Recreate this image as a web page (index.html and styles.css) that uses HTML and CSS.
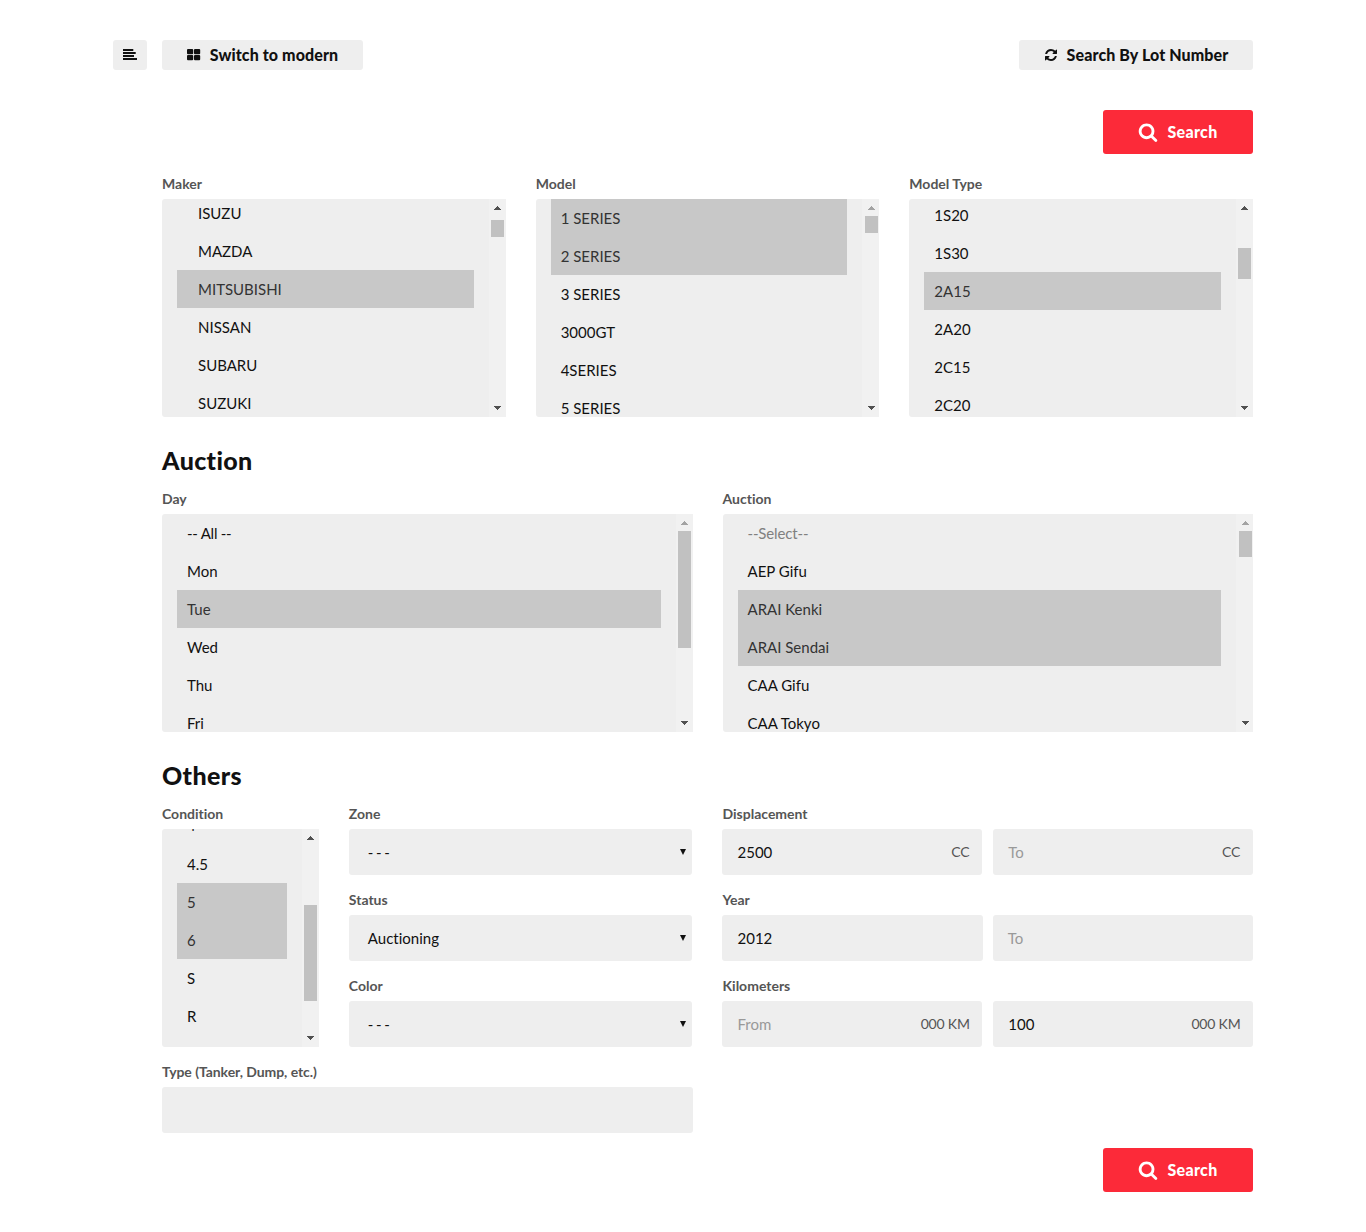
FILE: index.html
```html
<!DOCTYPE html>
<html lang="en">
<head>
<meta charset="utf-8">
<title>Auction Search</title>
<link rel="stylesheet" href="styles.css">
</head>
<body>
<svg class="defs" width="0" height="0">
  <symbol id="i-align" viewBox="0 0 14 14"><path d="M0 1h10.3v2H0zM0 4h12.7v2H0zM0 7h11v2H0zM0 10h14v2H0z"/></symbol>
  <symbol id="i-grid" viewBox="0 0 14 14"><rect x="0" y="1" width="6.2" height="5.2" rx="1"/><rect x="7" y="1" width="6.2" height="5.2" rx="1"/><rect x="0" y="7" width="6.2" height="5.2" rx="1"/><rect x="7" y="7" width="6.2" height="5.2" rx="1"/></symbol>
  <symbol id="i-refresh" viewBox="0 0 1792 1792"><path d="M1639 1056q0 5-1 7-64 268-268 434.5t-478 166.5q-146 0-282.5-55t-243.5-157l-129 129q-19 19-45 19t-45-19-19-45v-448q0-26 19-45t45-19h448q26 0 45 19t19 45-19 45l-137 137q71 66 161 102t187 36q134 0 250-65t186-179q11-17 53-117 8-23 30-23h192q13 0 22.5 9.5t9.5 22.5zm25-800v448q0 26-19 45t-45 19h-448q-26 0-45-19t-19-45 19-45l138-138q-148-137-349-137-134 0-250 65t-186 179q-11 17-53 117-8 23-30 23h-199q-13 0-22.5-9.5t-9.5-22.5v-7q65-268 270-434.5t480-166.5q146 0 284 55.5t245 156.5l130-129q19-19 45-19t45 19 19 45z"/></symbol>
  <symbol id="i-search" viewBox="0 0 1792 1792"><path d="M1216 832q0-185-131.5-316.5t-316.5-131.5-316.5 131.5-131.5 316.5 131.5 316.5 316.5 131.5 316.5-131.5 131.5-316.5zm512 832q0 52-38 90t-90 38q-54 0-90-38l-343-342q-179 124-399 124-143 0-273.5-55.5t-225-150-150-225-55.5-273.5 55.5-273.5 150-225 225-150 273.5-55.5 273.5 55.5 225 150 150 225 55.5 273.5q0 220-124 399l343 343q37 37 37 90z"/></symbol>
  <symbol id="i-up" viewBox="0 0 7 4"><path d="M3 0h1v1h1v1h1v1h1v1H0V3h1V2h1V1h1z"/></symbol>
  <symbol id="i-down" viewBox="0 0 7 4"><path d="M0 0h7v1H6v1H5v1H4v1H3V3H2V2H1V1H0z"/></symbol>
</svg>
<main class="page">
  <header class="toolbar">
    <button class="btn btn-menu" aria-label="Menu"><svg class="ico"><use href="#i-align"/></svg></button>
    <button class="btn btn-mode"><svg class="ico"><use href="#i-grid"/></svg><span>Switch to modern</span></button>
    <button class="btn btn-lot"><svg class="ico"><use href="#i-refresh"/></svg><span>Search By Lot Number</span></button>
  </header>
  <form class="form">
    <div class="actions"><button type="button" class="search"><svg class="ico-lg"><use href="#i-search"/></svg><span>Search</span></button></div>

    <section class="cols three">
      <div class="field">
        <label>Maker</label>
        <div class="list maker">
          <ul><li>ISUZU</li><li>MAZDA</li><li class="on">MITSUBISHI</li><li>NISSAN</li><li>SUBARU</li><li>SUZUKI</li></ul>
          <div class="bar"><svg class="arrow"><use href="#i-up"/></svg><i class="thumb"></i><svg class="arrow"><use href="#i-down"/></svg></div>
        </div>
      </div>
      <div class="field">
        <label>Model</label>
        <div class="list model">
          <ul><li class="on">1 SERIES</li><li class="on">2 SERIES</li><li>3 SERIES</li><li>3000GT</li><li>4SERIES</li><li>5 SERIES</li></ul>
          <div class="bar"><svg class="arrow off"><use href="#i-up"/></svg><i class="thumb"></i><svg class="arrow"><use href="#i-down"/></svg></div>
        </div>
      </div>
      <div class="field">
        <label>Model Type</label>
        <div class="list type">
          <ul><li>1S20</li><li>1S30</li><li class="on">2A15</li><li>2A20</li><li>2C15</li><li>2C20</li></ul>
          <div class="bar"><svg class="arrow"><use href="#i-up"/></svg><i class="thumb"></i><svg class="arrow"><use href="#i-down"/></svg></div>
        </div>
      </div>
    </section>

    <h2>Auction</h2>
    <section class="cols two">
      <div class="field">
        <label>Day</label>
        <div class="list day">
          <ul><li class="all">-- All --</li><li>Mon</li><li class="on">Tue</li><li>Wed</li><li>Thu</li><li>Fri</li></ul>
          <div class="bar"><svg class="arrow off"><use href="#i-up"/></svg><i class="thumb"></i><svg class="arrow"><use href="#i-down"/></svg></div>
        </div>
      </div>
      <div class="field">
        <label>Auction</label>
        <div class="list auction">
          <ul><li class="disabled">--Select--</li><li>AEP Gifu</li><li class="on">ARAI Kenki</li><li class="on">ARAI Sendai</li><li>CAA Gifu</li><li>CAA Tokyo</li></ul>
          <div class="bar"><svg class="arrow off"><use href="#i-up"/></svg><i class="thumb"></i><svg class="arrow"><use href="#i-down"/></svg></div>
        </div>
      </div>
    </section>

    <h2>Others</h2>
    <section class="cols others">
      <div class="field">
        <label>Condition</label>
        <div class="list condition">
          <ul><li>4</li><li>4.5</li><li class="on">5</li><li class="on">6</li><li>S</li><li>R</li></ul>
          <div class="bar"><svg class="arrow"><use href="#i-up"/></svg><i class="thumb"></i><svg class="arrow"><use href="#i-down"/></svg></div>
        </div>
      </div>
      <div class="stack">
        <div class="field"><label>Zone</label><div class="box select"><span class="none">- - -</span><i class="caret"></i></div></div>
        <div class="field"><label>Status</label><div class="box select"><span>Auctioning</span><i class="caret"></i></div></div>
        <div class="field"><label>Color</label><div class="box select"><span class="none">- - -</span><i class="caret"></i></div></div>
      </div>
      <div class="stack">
        <div class="field"><label>Displacement</label>
          <div class="pair"><div class="box"><span>2500</span><span class="unit">CC</span></div><div class="box"><span class="hint">To</span><span class="unit">CC</span></div></div>
        </div>
        <div class="field"><label>Year</label>
          <div class="pair plain"><div class="box"><span>2012</span></div><div class="box"><span class="hint">To</span></div></div>
        </div>
        <div class="field"><label>Kilometers</label>
          <div class="pair"><div class="box"><span class="hint">From</span><span class="unit km">000 KM</span></div><div class="box"><span>100</span><span class="unit km">000 KM</span></div></div>
        </div>
      </div>
    </section>

    <section class="cols two extra">
      <div class="field"><label class="long">Type (Tanker, Dump, etc.)</label><div class="box"></div></div>
    </section>
    <div class="actions bottom"><button type="button" class="search"><svg class="ico-lg"><use href="#i-search"/></svg><span>Search</span></button></div>
  </form>
</main>
</body>
</html>
```
FILE: styles.css
```css
* { box-sizing: border-box; }
body { margin: 0; background: #fff; color: #111; font: 15px/20px Lato, "Liberation Sans", sans-serif; font-variant-ligatures: none; }
.defs { display: block; }
.page { width: 1140px; margin-left: 113px; padding-top: 40px; }
.toolbar { display: flex; gap: 15px; }
button { border: 0; padding: 0; font-family: inherit; font-variant-ligatures: none; display: flex; align-items: center; justify-content: center; }
button span { padding-bottom: 2px; }
.btn { height: 30px; border-radius: 3px; background: #eee; color: #111; font-size: 16px; font-weight: 900; letter-spacing: .1px; gap: 9px; }
.btn-menu { width: 34px; }
.btn-mode { width: 201px; }
.btn-lot { width: 234px; margin-left: auto; }
.ico { width: 14px; height: 14px; fill: currentColor; }
.ico-lg { width: 20px; height: 20px; fill: currentColor; }
.form { margin: 40px 0 0 49px; }
.actions { display: flex; justify-content: flex-end; margin-bottom: 20px; }
.bottom { margin: 15px 0 40px; }
.search { width: 150px; height: 44px; border-radius: 3px; background: #fc2a39; color: #fff; font-size: 16px; font-weight: 900; letter-spacing: .3px; gap: 9px; }

.cols { display: grid; column-gap: 30px; }
.three { grid-template-columns: repeat(3, 1fr); }
.two { grid-template-columns: repeat(2, 1fr); }
.others { grid-template-columns: 156.83px 343.67px 530.5px; }
.extra { margin-top: 15px; }
.stack { display: grid; row-gap: 15px; }
h2 { margin: 27px 0 13px; font-size: 25px; line-height: 32px; font-weight: 900; letter-spacing: .35px; color: #111; }
label { display: block; margin-bottom: 5px; font-size: 14px; line-height: 20px; font-weight: 700; color: #555; }
.long { letter-spacing: -.06px; }

.list { display: flex; height: 218px; overflow: hidden; background: #eee; border-radius: 3px 0 0 3px; }
.list ul { flex: 1; margin: 0; padding: 0 15px; list-style: none; }
.list li { height: 38px; padding-left: 10px; line-height: 38px; white-space: nowrap; }
.list .on { background: #c8c8c8; color: #333; }
.list .disabled { color: #808080; letter-spacing: -.15px; }
.list .all { letter-spacing: -.25px; }
.maker ul { margin-top: -5px; }
.maker li { padding-left: 21px; }
.type ul { margin-top: -3px; }
.condition ul { margin-top: -22px; }
.condition li:first-child { line-height: 36px; }

.bar { width: 17px; padding: 7px 2px; background: #f1f1f1; display: flex; flex-direction: column; align-items: center; }
.model .bar, .auction .bar { padding-left: 3px; padding-right: 1px; }
.arrow { width: 7px; height: 4px; fill: #505050; shape-rendering: crispEdges; }
.arrow.off { fill: #a3a3a3; }
.arrow:last-child { margin-top: auto; }
.thumb { width: 13px; height: 17px; margin-top: 6px; background: #c1c1c1; }
.maker .thumb { margin-top: 10px; }
.type .thumb { height: 31px; margin-top: 38px; }
.day .thumb { height: 117px; }
.auction .thumb { height: 26px; }
.condition .thumb { height: 96px; margin-top: 65px; }

.box { height: 46px; padding: 0 12.5px 0 15px; display: flex; align-items: center; justify-content: space-between; background: #eee; border-radius: 3px; }
.select { padding: 0 6px 0 19px; }
.none { letter-spacing: -.7px; word-spacing: .2px; }
.caret { border: solid transparent; border-width: 6px 3px 0; border-top-color: #111; }
.pair { display: grid; grid-template-columns: 1fr 1fr; column-gap: 11px; }
.plain { column-gap: 10px; }
.hint { color: #999; }
.unit { color: #555; font-size: 14px; }
.km { letter-spacing: -.2px; }
```
